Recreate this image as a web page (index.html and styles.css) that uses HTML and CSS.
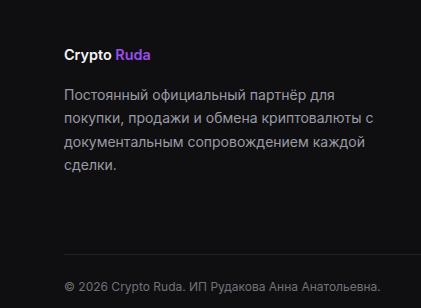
FILE: index.html
```html
<!DOCTYPE html>
<html lang="ru">
<head>
<meta charset="utf-8">
<link rel="stylesheet" href="styles.css">
</head>
<body>
<footer class="site-footer">
  <div class="brand">
    <div class="brand-name">Crypto <span class="accent">Ruda</span></div>
    <p class="brand-text">Постоянный официальный партнёр для покупки, продажи и обмена криптовалюты с документальным сопровождением каждой сделки.</p>
  </div>
  <div class="bottom">
    <p class="copy">© 2026 Crypto Ruda. ИП Рудакова Анна Анатольевна.</p>
  </div>
</footer>
</body>
</html>
```
FILE: styles.css
```css
html, body {
  margin: 0;
  padding: 0;
  background: #0f0f11;
  height: 100%;
}
body {
  font-family: Inter, "Noto Sans", sans-serif;
  color: #f4f4f5;
}
.site-footer {
  padding: 45px 0 0 64px;
  display: flex;
  flex-direction: column;
}
.brand {
  width: 320px;
}
.brand-name {
  font-size: 14.4px;
  font-weight: 600;
  line-height: 20px;
  color: #f4f4f5;
}
.accent {
  color: #9d4cf0;
}
.brand-text {
  margin: 18px 0 0;
  font-size: 14px;
  line-height: 23.3px;
  color: #9a9aa4;
}
.bottom {
  margin-top: 78px;
  border-top: 1px solid #232327;
  padding-top: 24px;
}
.copy {
  margin: 0;
  font-size: 12px;
  line-height: 16px;
  color: #71717a;
}
```
